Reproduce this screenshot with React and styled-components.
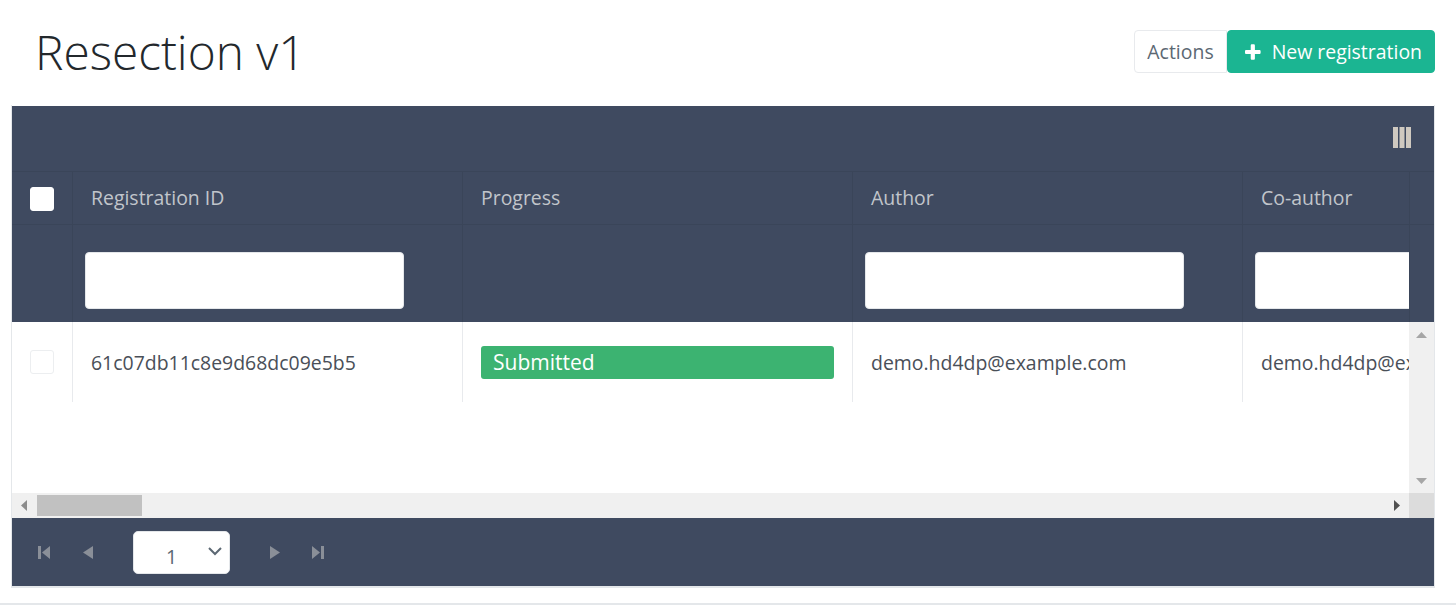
import React from 'react';
import styled, { createGlobalStyle } from 'styled-components';

const GlobalStyle = createGlobalStyle`
  html, body {
    margin: 0;
    padding: 0;
    background: #fff;
    font-family: 'Open Sans', 'Liberation Sans', sans-serif;
    overflow: hidden;
  }
  * { box-sizing: border-box; }
`;

const navy = '#3f4a60';
const line = '#3a4559';

const Page = styled.div`
  height: 614px;
  display: flex;
  flex-direction: column;
`;

const Content = styled.div`
  height: 603px;
  padding: 0 21px 0 11px;
`;

const Footer = styled.div`
  height: 2px;
  background: #e4e7ea;
`;

const Header = styled.div`
  height: 105px;
  display: flex;
  align-items: flex-start;
  justify-content: space-between;
  padding: 30px 0 0 24px;
`;

const Title = styled.h1`
  margin: -9px 0 0;
  font-size: 47.8px;
  line-height: 61px;
  font-weight: 300;
  color: #23282c;
`;

const Actions = styled.div`
  display: flex;
`;

const Button = styled.button`
  height: 43px;
  border: 1px solid ${p => (p.$primary ? '#1bb592' : '#e8eaed')};
  border-radius: 4px;
  background: ${p => (p.$primary ? '#1bb592' : '#fff')};
  color: ${p => (p.$primary ? '#fff' : '#5c6873')};
  font: 400 19.45px 'Open Sans', sans-serif;
  padding: 0 12px;
  display: flex;
  align-items: center;
  gap: 11px;
  white-space: nowrap;
`;

const ActionsButton = styled(Button)`
  width: 93px;
  justify-content: center;
  border-radius: 4px 0 0 4px;
`;

const PrimaryButton = styled(Button)`
  width: 208px;
  padding-left: 17px;
`;

const Card = styled.div`
  width: 1424px;
  border: 1px solid #e4e7ea;
  border-bottom-width: 2px;
  border-top: 0;
  padding-top: 1px;
  background: #fff;
`;

const Toolbar = styled.div`
  height: 66px;
  background: ${navy};
  display: flex;
  align-items: flex-start;
  justify-content: flex-end;
  padding: 21px 23px 0 0;
  border-bottom: 1px solid ${line};
`;

const GridRow = styled.div`
  display: grid;
  grid-template-columns: 61px 390px 390px 390px 167px 1fr;
  height: ${p => p.$height}px;
  background: ${navy};
  border-bottom: ${p => (p.$last ? 0 : `1px solid ${line}`)};
`;

const HeadCell = styled.div`
  border-right: 1px solid ${line};
  padding: 0 18px 2px;
  display: flex;
  align-items: center;
  overflow: hidden;
  color: #c1c5cb;
  font-size: 19.45px;
  white-space: nowrap;
  &:last-child { border-right: 0; }
`;

const CheckCell = styled(HeadCell)`
  justify-content: center;
  padding: 2px 0 0;
`;

const Checkbox = styled.span`
  width: 24px;
  height: 24px;
  border-radius: 3px;
  background: #fff;
  border: 1px solid ${p => (p.$muted ? '#eceef0' : '#fff')};
  display: block;
`;

const FilterCell = styled.div`
  border-right: 1px solid ${line};
  padding: 27px 0 0 12px;
  overflow: hidden;
  &:last-child { border-right: 0; }
`;

const FilterInput = styled.input`
  display: block;
  width: 319px;
  height: 57px;
  border: 1px solid #e4e7ea;
  border-radius: 4px;
  background: #fff;
  padding: 0;
`;

const BodyArea = styled.div`
  display: grid;
  grid-template-columns: 1397px 25px;
  height: 171px;
`;

const Viewport = styled.div`
  overflow: hidden;
  background: #fff;
`;

const BodyRow = styled.div`
  display: grid;
  grid-template-columns: 61px 390px 390px 390px 167px;
  height: 80px;
`;

const BodyCell = styled.div`
  border-right: 1px solid #e8eaed;
  padding: 0 18px;
  display: flex;
  align-items: center;
  overflow: hidden;
  color: #4a4f58;
  font-size: 19.45px;
  white-space: nowrap;
  &:last-child { border-right: 0; }
`;

const BodyCheckCell = styled(BodyCell)`
  justify-content: center;
  padding: 0;
`;

const Status = styled.div`
  width: 100%;
  height: 33px;
  line-height: 32px;
  border-radius: 3px;
  background: #3cb371;
  color: #fff;
  font-size: 21px;
  padding: 0 12px;
`;

const VScroll = styled.div`
  background: #f0f0f0;
  display: flex;
  flex-direction: column;
  justify-content: space-between;
  align-items: center;
  padding: 10px 0 9px;
`;

const BottomBar = styled.div`
  display: grid;
  grid-template-columns: 1397px 25px;
  height: 25px;
`;

const HScroll = styled.div`
  background: #f0f0f0;
  display: flex;
  align-items: center;
  justify-content: space-between;
  padding: 0 9px;
`;

const Thumb = styled.div`
  width: 105px;
  height: 21px;
  background: #c1c1c1;
  margin-left: 10px;
  margin-right: auto;
`;

const Corner = styled.div`
  background: #dcdcdc;
`;

const Pager = styled.div`
  height: 68px;
  background: ${navy};
  display: flex;
  align-items: center;
  padding-left: 25px;
`;

const PagerIcon = styled.svg`
  width: 14px;
  height: 14px;
  margin-right: ${p => p.$gap}px;
  fill: #8a8f98;
  display: block;
`;

const PageSelect = styled.div`
  width: 97px;
  height: 43px;
  background: #fff;
  border: 1px solid #e4e7ea;
  border-radius: 5px;
  position: relative;
  color: #5c6873;
  font-size: 19.45px;
  line-height: 50px;
  padding-left: 32px;
  margin-right: 38px;
`;

const Chevron = styled.svg`
  position: absolute;
  right: 6px;
  top: 13px;
  width: 16px;
  height: 12px;
  fill: none;
  stroke: #5c6873;
  stroke-width: 2;
`;

const Plus = () => (
  <svg width="16" height="16" viewBox="0 0 15 15" fill="#fff">
    <path d="M5.500 1.200C5.500.5 6 0 6.700 0h1.600c.7 0 1.200.5 1.200 1.200v4.300h4.300c.7 0 1.200.5 1.200 1.200v1.600c0 .7-.5 1.200-1.200 1.200H9.500v4.300c0 .7-.5 1.200-1.200 1.200H6.700c-.7 0-1.200-.5-1.200-1.200V9.500H1.200C.5 9.500 0 9 0 8.300V6.700c0-.7.5-1.200 1.200-1.200h4.300z" />
  </svg>
);

const ColumnsIcon = () => (
  <svg width="18" height="21" viewBox="0 0 18 21" fill="#cfc9c0">
    <rect x="0" y="0" width="5" height="21" />
    <rect x="6.500" y="0" width="5" height="21" />
    <rect x="13" y="0" width="5" height="21" />
  </svg>
);

const ArrowUp = () => (
  <svg width="11" height="6" viewBox="0 0 11 6" fill="#a6a6a6"><path d="M5.500 0 11 6H0z" /></svg>
);
const ArrowDown = () => (
  <svg width="11" height="6" viewBox="0 0 11 6" fill="#a6a6a6"><path d="M0 0h11L5.500 6z" /></svg>
);
const ArrowLeft = () => (
  <svg width="6" height="11" viewBox="0 0 6 11" fill="#8c8c8c"><path d="M6 0v11L0 5.500z" /></svg>
);
const ArrowRight = () => (
  <svg width="6" height="11" viewBox="0 0 6 11" fill="#505050"><path d="M0 0v11l6-5.500z" /></svg>
);

const columns = ['Registration ID', 'Progress', 'Author', 'Co-author'];

export default function App() {
  return (
    <Page>
      <GlobalStyle />
      <Content>
        <Header>
          <Title>Resection v1</Title>
          <Actions>
            <ActionsButton>Actions</ActionsButton>
            <PrimaryButton $primary><Plus />New registration</PrimaryButton>
          </Actions>
        </Header>
        <Card>
          <Toolbar><ColumnsIcon /></Toolbar>
          <GridRow $height={53}>
            <CheckCell><Checkbox /></CheckCell>
            {columns.map(c => <HeadCell key={c}>{c}</HeadCell>)}
            <HeadCell />
          </GridRow>
          <GridRow $height={97} $last>
            <FilterCell />
            <FilterCell><FilterInput /></FilterCell>
            <FilterCell />
            <FilterCell><FilterInput /></FilterCell>
            <FilterCell><FilterInput /></FilterCell>
            <FilterCell />
          </GridRow>
          <BodyArea>
            <Viewport>
              <BodyRow>
                <BodyCheckCell><Checkbox $muted /></BodyCheckCell>
                <BodyCell>61c07db11c8e9d68dc09e5b5</BodyCell>
                <BodyCell><Status>Submitted</Status></BodyCell>
                <BodyCell>demo.hd4dp@example.com</BodyCell>
                <BodyCell>demo.hd4dp@example.com</BodyCell>
              </BodyRow>
            </Viewport>
            <VScroll><ArrowUp /><ArrowDown /></VScroll>
          </BodyArea>
          <BottomBar>
            <HScroll><ArrowLeft /><Thumb /><ArrowRight /></HScroll>
            <Corner />
          </BottomBar>
          <Pager>
            <PagerIcon $gap={30} viewBox="0 0 14 14"><path d="M1 1h3v13H1zM13 1v13L5 7.500z" /></PagerIcon>
            <PagerIcon $gap={38} viewBox="0 0 14 14"><path d="M12 1v13L2 7.500z" /></PagerIcon>
            <PageSelect>1<Chevron viewBox="0 0 16 12"><path d="M2 3l6 6 6-6" /></Chevron></PageSelect>
            <PagerIcon $gap={29} viewBox="0 0 14 14"><path d="M2 1v13l10-6.500z" /></PagerIcon>
            <PagerIcon $gap={0} viewBox="0 0 14 14"><path d="M1 1v13l8-6.500zM10 1h3v13h-3z" /></PagerIcon>
          </Pager>
        </Card>
      </Content>
      <Footer />
    </Page>
  );
}
